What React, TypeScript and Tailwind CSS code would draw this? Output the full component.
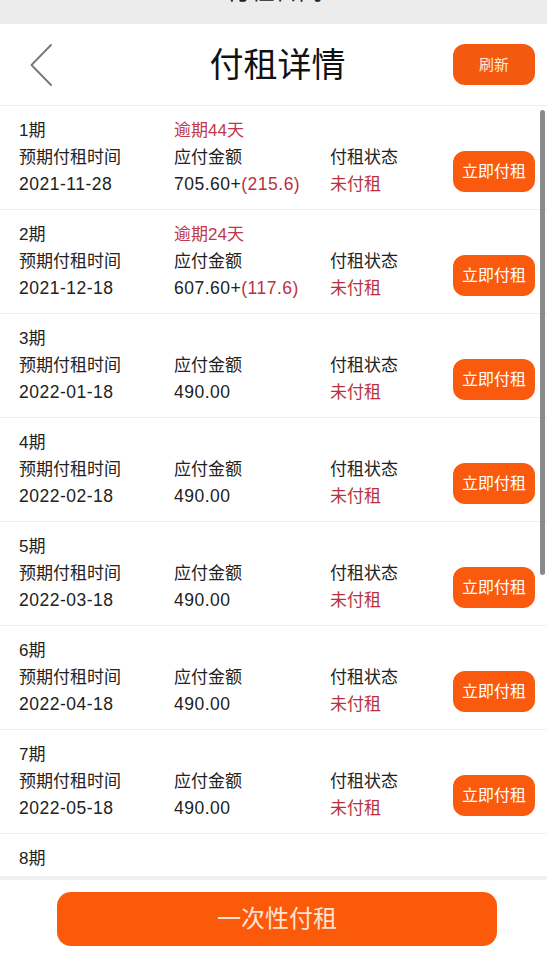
type Row = {
  no: number;
  date: string;
  amount: string;
  extra?: string;
  overdue?: string;
};

const rows: Row[] = [
  { no: 1, date: "2021-11-28", amount: "705.60+", extra: "(215.6)", overdue: "逾期44天" },
  { no: 2, date: "2021-12-18", amount: "607.60+", extra: "(117.6)", overdue: "逾期24天" },
  { no: 3, date: "2022-01-18", amount: "490.00" },
  { no: 4, date: "2022-02-18", amount: "490.00" },
  { no: 5, date: "2022-03-18", amount: "490.00" },
  { no: 6, date: "2022-04-18", amount: "490.00" },
  { no: 7, date: "2022-05-18", amount: "490.00" },
];

function RentRow({ row }: { row: Row }) {
  return (
    <div className="h-[104px] shrink-0 border-b border-[#eeeeee] flex items-start pl-[19px] pr-[12px]">
      <div className="flex-1 pt-[11px] grid grid-cols-[155px_156px_1fr] text-[17px] leading-[27px] text-[#222]">
        <div>{row.no}期</div>
        <div className="text-[#c0394a]">{row.overdue ?? ""}</div>
        <div></div>
        <div>预期付租时间</div>
        <div>应付金额</div>
        <div>付租状态</div>
        <div className="text-[17.5px] tracking-[0.5px]">{row.date}</div>
        <div className="text-[17.5px] tracking-[0.5px]">
          {row.amount}
          {row.extra && <span className="text-[#b83240]">{row.extra}</span>}
        </div>
        <div className="text-[#b83240]">未付租</div>
      </div>
      <button className="mt-[45px] w-[82px] h-[41px] rounded-[12px] bg-[#f95a0e] text-white text-[16px] leading-none">
        立即付租
      </button>
    </div>
  );
}

export default function App() {
  return (
    <div
      className="relative w-full h-[953px] overflow-hidden bg-white flex flex-col"
      style={{ fontFamily: '"Liberation Sans", "Noto Sans CJK SC", sans-serif' }}
    >
      <div className="h-[24px] shrink-0 bg-[#ececec] overflow-hidden">
        <div className="-mt-[21px] text-center text-[24px] leading-[24px] text-[#222] pl-[2px]">付租合同</div>
      </div>

      <div className="h-[82px] shrink-0 grid grid-cols-[1fr_auto_1fr] items-center border-b border-[#eeeeee]">
        <div className="pl-[30px]">
          <svg width="23" height="42" viewBox="0 0 23 42" fill="none">
            <polyline points="21,1 1.5,21 21,41" stroke="#777777" strokeWidth="1.8" strokeLinecap="round" strokeLinejoin="round" />
          </svg>
        </div>
        <div className="text-[34px] leading-none text-[#111] pl-[8px]">付租详情</div>
        <div className="flex justify-end pr-[12px]">
          <button className="w-[82px] h-[41px] rounded-[12px] bg-[#f35a10] text-[#fde8dc] text-[15px] leading-none">
            刷新
          </button>
        </div>
      </div>

      <div className="flex-1 overflow-hidden flex flex-col">
        {rows.map((r) => (
          <RentRow key={r.no} row={r} />
        ))}
        <div className="pl-[19px] pt-[11px] text-[17px] leading-[27px] text-[#222]">8期</div>
      </div>

      <div className="h-[77px] shrink-0 border-t-[4px] border-[#f1f1f1] pt-[12px]">
        <button className="ml-[57px] w-[440px] h-[54px] rounded-[14px] bg-[#fc5a0b] text-[#fde3d3] text-[24px] leading-none">
          一次性付租
        </button>
      </div>

      <div className="absolute right-[2px] top-[110px] w-[5px] h-[465px] rounded-full bg-[#8a8a8a]" />
    </div>
  );
}
